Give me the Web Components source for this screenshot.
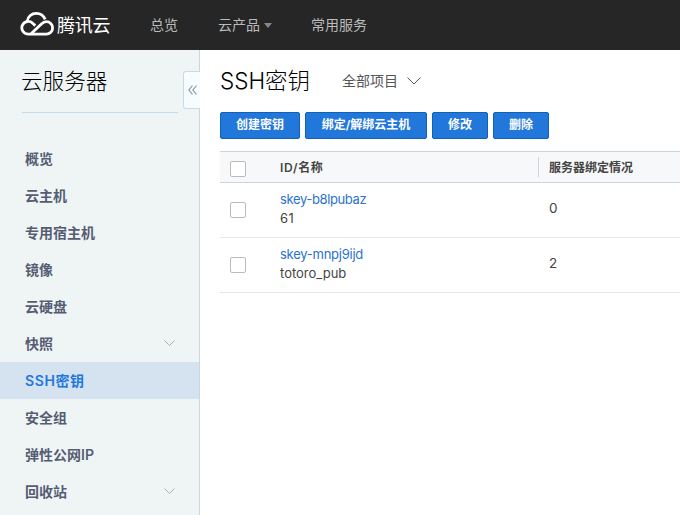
<!DOCTYPE html>
<html lang="zh-CN"><head><meta charset="utf-8"><title>SSH密钥</title>
<style>
html,body{margin:0;height:100%;overflow:hidden}
body{font-family:Inter,"Noto Sans CJK SC",sans-serif;background:#fff}
</style></head><body>
<cloud-console></cloud-console>
<script>
const define=(name,html)=>customElements.define(name,class extends HTMLElement{
  constructor(){super();const t=document.createElement('template');t.innerHTML=html;
    this.attachShadow({mode:'open'}).append(t.content.cloneNode(true));}
});
define('cloud-logo',`<style>
:host{display:flex;align-items:center;width:90px;height:50px;color:#fff;font:400 18px/48px "Noto Sans CJK SC",sans-serif}
svg{width:34px;height:26px;flex:none;margin:-2px 3px 0 0}
span{white-space:nowrap;letter-spacing:-.2px;padding-bottom:2px}
</style><svg viewBox="0 0 34 26" fill="none" stroke="#fff" stroke-width="2.8"><path d="M11.5 23.2H8.2A6.4 6.4 0 1 1 12.7 12.2L15.3 14.6M7.2 10.2C7.8 5.4 11.7 2.3 16.2 2.3C20.3 2.3 23.7 4.7 25.2 8.4M10.5 23.2L21.4 12.9C23 11.4 24.5 10.6 26.3 10.6A6.3 6.3 0 0 1 26.3 23.2H10.5"/></svg><span>腾讯云</span>`);
define('top-bar',`<style>
:host{display:flex;height:50px;box-sizing:border-box;padding-left:20px;background:#262626;color:#bbb;font-size:14px;line-height:50px;white-space:nowrap}
nav{display:flex;margin-left:40px;gap:40px}
.drop{display:flex;align-items:center;width:53px}
i{border:4px solid transparent;border-top:5px solid #888;border-bottom:0;margin-left:4px}
</style><cloud-logo></cloud-logo><nav><span>总览</span><span class="drop">云产品<i></i></span><span>常用服务</span></nav>`);
define('nav-item',`<style>
:host{display:flex;align-items:center;justify-content:space-between;height:37px;box-sizing:border-box;padding:0 24px 0 25px;color:#565d73;font-size:14px;font-weight:600;line-height:36px}
:host([active]){background:#d5e2f0;color:#2277da;letter-spacing:.6px}
svg{display:none;width:11px;height:7px;margin-top:-1px}
:host([expandable]) svg{display:block}
</style><span><slot></slot></span><svg viewBox="0 0 11 7" fill="none" stroke="#a6b2bb"><path d="M.5 .5L5.5 5.5L10.5 .5"/></svg>`);
define('side-bar',`<style>
:host{display:block;position:relative;width:200px;box-sizing:border-box;border-right:1px solid #c9d8de;background:#eff5f5}
h2{margin:0 21px 0 22px;height:62px;border-bottom:1px solid #c4dbea;font:300 21.6px/60px "Noto Sans CJK SC",sans-serif;color:#000}
h2 span{margin-left:-1px}
nav{padding-top:27px}
.fold{position:absolute;top:21px;right:-1px;width:17px;height:38px;box-sizing:border-box;border:1px solid #c4dcea;border-right:0;border-radius:3px 0 0 3px;background:#f7fdff}
.fold svg{display:block;margin:13px 0 0 4px}
</style><h2><span>云服务器</span></h2><nav><nav-item>概览</nav-item><nav-item>云主机</nav-item><nav-item>专用宿主机</nav-item><nav-item>镜像</nav-item><nav-item>云硬盘</nav-item><nav-item expandable>快照</nav-item><nav-item active>SSH密钥</nav-item><nav-item>安全组</nav-item><nav-item>弹性公网IP</nav-item><nav-item expandable>回收站</nav-item></nav>
<div class="fold"><svg width="9" height="10" fill="none" stroke="#8199a8" stroke-width="1.2"><path d="M4.5 .5L.9 5L4.5 9.5M8.5 .5L4.9 5L8.5 9.5"/></svg></div>`);
define('action-button',`<style>
:host{display:block;height:27px;box-sizing:border-box;border:1px solid #0f62b5;border-radius:2px;padding:0 15px;background:#2277da;color:#fff;font-size:12px;line-height:24px;font-weight:600;text-align:center;white-space:nowrap}
</style><slot></slot>`);
define('check-box',`<style>:host{display:block;width:16px;height:16px;box-sizing:border-box;border:1px solid #bbb;border-radius:2px;background:#fff}</style>`);
define('table-head',`<style>
:host{display:grid;grid-template-columns:60px 258px 1fr;align-items:center;height:32px;box-sizing:border-box;border-top:1px solid #cfd3df;border-bottom:1px solid #cfd3df;background:#f6f8fa;color:#444;font-size:12px;font-weight:600;line-height:22px}
check-box{margin:3px 0 0 10px}
.last{height:20px;border-left:1px solid #cfd3df;padding-left:10px}
.id{font-size:12px;letter-spacing:.7px;padding-top:2px}
</style><check-box></check-box><span class="id">ID/名称</span><span class="last">服务器绑定情况</span>`);
define('key-row',`<style>
:host{display:grid;grid-template-columns:60px 269px 1fr;align-items:center;height:55px;box-sizing:border-box;border-bottom:1px solid #e3e7ee;color:#444;font-size:13px;line-height:19px}
check-box{margin-left:10px}
.count{margin-top:-3px;font-size:13.5px}
.key{margin-top:-3px}
.link{color:#2b72cf}
</style><check-box></check-box><div class="key"><div class="link"><slot name="id"></slot></div><div><slot></slot></div></div><div class="count"><slot name="count"></slot></div>`);
define('key-panel',`<style>
:host{display:block;padding-left:20px}
header{display:flex;height:62px;align-items:center}
h1{margin:0;width:122px;font:300 22.5px/62px Inter,"Noto Sans CJK SC",sans-serif;color:#000;white-space:nowrap}
.scope{display:flex;align-items:center;font-size:14px;color:#555;padding-bottom:2px}
.scope svg{margin:2px 0 0 9px}
.actions{display:flex;gap:5px;margin-bottom:12px}
</style><header><h1>SSH密钥</h1><div class="scope">全部项目<svg width="14" height="8" fill="none" stroke="#555"><path d="M.5 .5L7 7L13.5 .5"/></svg></div></header>
<div class="actions"><action-button style="width:80px">创建密钥</action-button><action-button style="width:122px">绑定/解绑云主机</action-button><action-button style="width:56px">修改</action-button><action-button style="width:56px">删除</action-button></div>
<table-head></table-head>
<key-row><span slot="id" style="letter-spacing:-.38px">skey-b8lpubaz</span><span style="letter-spacing:.5px">61</span><span slot="count">0</span></key-row>
<key-row><span slot="id" style="letter-spacing:-.25px">skey-mnpj9ijd</span>totoro_pub<span slot="count">2</span></key-row>`);
define('cloud-console',`<style>
:host{display:grid;grid-template:50px 465px/200px 480px;width:680px;height:515px;overflow:hidden}
top-bar{grid-column:1/3}
</style><top-bar></top-bar><side-bar></side-bar><key-panel></key-panel>`);
</script></body></html>
